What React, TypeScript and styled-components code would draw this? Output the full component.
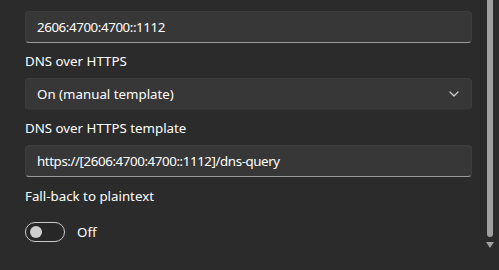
import React from 'react';
import styled, { createGlobalStyle } from 'styled-components';

const GlobalStyle = createGlobalStyle`
  html, body {
    margin: 0;
    padding: 0;
    background: #2b2b2b;
  }
  body {
    font-family: "Noto Sans", "Open Sans", sans-serif;
    color: #ffffff;
  }
`;

const Pane = styled.div`
  position: relative;
  width: 499px;
  height: 270px;
  overflow: hidden;
  background: #2b2b2b;
`;

const Form = styled.div`
  display: flex;
  flex-direction: column;
  width: 447px;
  padding: 11px 0 0 25px;
`;

const Field = styled.div<{ $underline?: boolean; $tight?: boolean }>`
  display: flex;
  align-items: center;
  justify-content: space-between;
  box-sizing: border-box;
  height: 32px;
  padding: 0 11px;
  border-radius: 4px;
  background: #373737;
  border: 1px solid #3d3d3d;
  border-bottom-color: ${(p) => (p.$underline ? '#9a9a9a' : '#333333')};
  font-size: 13.3px;
  letter-spacing: ${(p) => (p.$tight ? '-0.4px' : 'normal')};
  color: #ffffff;
`;

const Label = styled.div<{ $top?: number; $bottom?: number }>`
  margin-top: ${(p) => p.$top ?? 8}px;
  margin-bottom: ${(p) => p.$bottom ?? 7}px;
  line-height: 20px;
  font-size: 13.3px;
  color: #ffffff;
`;

const Chevron = styled.svg`
  width: 10px;
  height: 6px;
  margin-right: 1px;
`;

const ToggleRow = styled.div`
  display: flex;
  align-items: center;
  gap: 12px;
  height: 32px;
  margin-top: 10px;
  font-size: 13.3px;
`;

const Track = styled.div`
  display: flex;
  align-items: center;
  box-sizing: border-box;
  width: 40px;
  height: 20px;
  padding: 0 4px;
  border-radius: 10px;
  border: 1px solid #cbcbcb;
  background: #272727;
`;

const Knob = styled.div`
  width: 12px;
  height: 12px;
  border-radius: 50%;
  background: #cecece;
`;

const ScrollBar = styled.div`
  position: absolute;
  top: 0;
  right: 5px;
  display: flex;
  flex-direction: column;
  align-items: center;
  gap: 5px;
  width: 9px;
`;

const Thumb = styled.div`
  width: 6px;
  height: 237px;
  border-radius: 0 0 3px 3px;
  background: #a0a0a0;
`;

const Arrow = styled.div`
  width: 0;
  height: 0;
  border-left: 4.5px solid transparent;
  border-right: 4.5px solid transparent;
  border-top: 6px solid #a0a0a0;
`;

export default function App() {
  return (
    <>
      <GlobalStyle />
      <Pane>
        <Form>
          <Field $underline $tight>2606:4700:4700::1112</Field>
          <Label>DNS over HTTPS</Label>
          <Field>
            On (manual template)
            <Chevron viewBox="0 0 10 6">
              <path d="M1 1l4 4 4-4" fill="none" stroke="#d0d0d0" strokeWidth="1.2" strokeLinecap="round" strokeLinejoin="round" />
            </Chevron>
          </Field>
          <Label>DNS over HTTPS template</Label>
          <Field $underline $tight>https://[2606:4700:4700::1112]/dns-query</Field>
          <Label $top={9} $bottom={0}>Fall-back to plaintext</Label>
          <ToggleRow>
            <Track>
              <Knob />
            </Track>
            Off
          </ToggleRow>
        </Form>
        <ScrollBar>
          <Thumb />
          <Arrow />
        </ScrollBar>
      </Pane>
    </>
  );
}
